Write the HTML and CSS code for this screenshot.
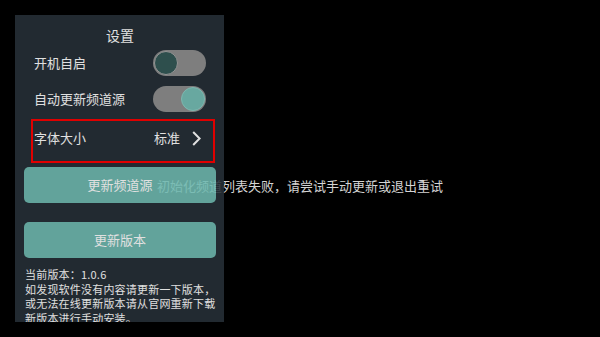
FILE: index.html
```html
<!DOCTYPE html>
<html>

<head>
  <meta charset="utf-8" />
  <meta name="viewport" content="width=device-width,minimum-scale=1.0,maximum-scale=1.0,user-scalable=no" />
  <link rel="stylesheet" href="styles.css">
</head>

<body>
  <div class="screen">
    <div class="toast">初始化频道列表失败，请尝试手动更新或退出重试</div>
    <div class="panel">
      <div class="title">设置</div>
      <div class="row">
        <span class="label">开机自启</span>
        <div class="switch"><div class="thumb"></div></div>
      </div>
      <div class="row">
        <span class="label">自动更新频道源</span>
        <div class="switch on"><div class="thumb"></div></div>
      </div>
      <div class="row focus">
        <span class="label">字体大小</span>
        <span class="value">
          标准
          <svg class="arrow" width="9" height="15" viewBox="0 0 9 15">
            <path d="M1.2 1 L7.6 7.5 L1.2 14" fill="none" stroke="#fff" stroke-width="2" />
          </svg>
        </span>
      </div>
      <div class="btn first">更新频道源</div>
      <div class="btn">更新版本</div>
      <div class="info">
        当前版本：1.0.6<br>
        如发现软件没有内容请更新一下版本，<br>
        或无法在线更新版本请从官网重新下载<br>
        新版本进行手动安装。
      </div>
    </div>
  </div>
</body>
</html>
```

FILE: styles.css
```css
body {
  margin: 0;
  padding: 0;
  background-color: #000;
  font-family: "Noto Sans CJK SC", "Noto Sans", sans-serif;
  color: #fff;
}

.screen {
  position: relative;
  width: 600px;
  height: 337px;
  overflow: hidden;
  padding-top: 15px;
  box-sizing: border-box;
}

.toast {
  position: absolute;
  left: 157px;
  top: 177px;
  z-index: 0;
  font-size: 13px;
  line-height: 18px;
  color: #d4d4d4;
  white-space: nowrap;
}

.panel {
  position: relative;
  z-index: 1;
  margin-left: 15px;
  width: 209px;
  height: 307px;
  box-sizing: border-box;
  padding: 10px 8px 0 9px;
  overflow: hidden;
  background-color: #273038;
  opacity: 0.88;
}

.title {
  text-align: center;
  font-size: 14px;
  line-height: 20px;
  height: 20px;
}

.row {
  display: flex;
  align-items: center;
  justify-content: space-between;
  height: 36px;
  margin: 0 10px;
}

.label {
  font-size: 13px;
  line-height: 18px;
}

.switch {
  display: flex;
  align-items: center;
  width: 53px;
  height: 26px;
  padding: 0 1px;
  box-sizing: border-box;
  border-radius: 13px;
  background-color: #909090;
}

.switch.on {
  justify-content: flex-end;
}

.thumb {
  width: 24px;
  height: 24px;
  box-sizing: border-box;
  border-radius: 50%;
  border: 1px solid #a8a8a8;
  background-color: #355a58;
}

.switch.on .thumb {
  border-color: #8fd0c7;
  background-color: #77c0b7;
}

.row.focus {
  height: 44px;
  box-sizing: border-box;
  margin: 2px 1px 0 7px;
  padding: 0 12px 6px 1px;
  border: 2px solid #ff0000;
}

.value {
  display: flex;
  align-items: center;
  font-size: 13px;
  line-height: 18px;
}

.arrow {
  margin-left: 12px;
}

.btn {
  height: 36px;
  line-height: 36px;
  margin-top: 19px;
  border-radius: 5px;
  background-color: #70bab1;
  text-align: center;
  font-size: 13px;
}

.btn.first {
  margin-top: 4px;
}

.info {
  margin-top: 9px;
  padding-left: 1px;
  font-size: 11px;
  letter-spacing: 0.2px;
  line-height: 14.5px;
  white-space: nowrap;
}
```
